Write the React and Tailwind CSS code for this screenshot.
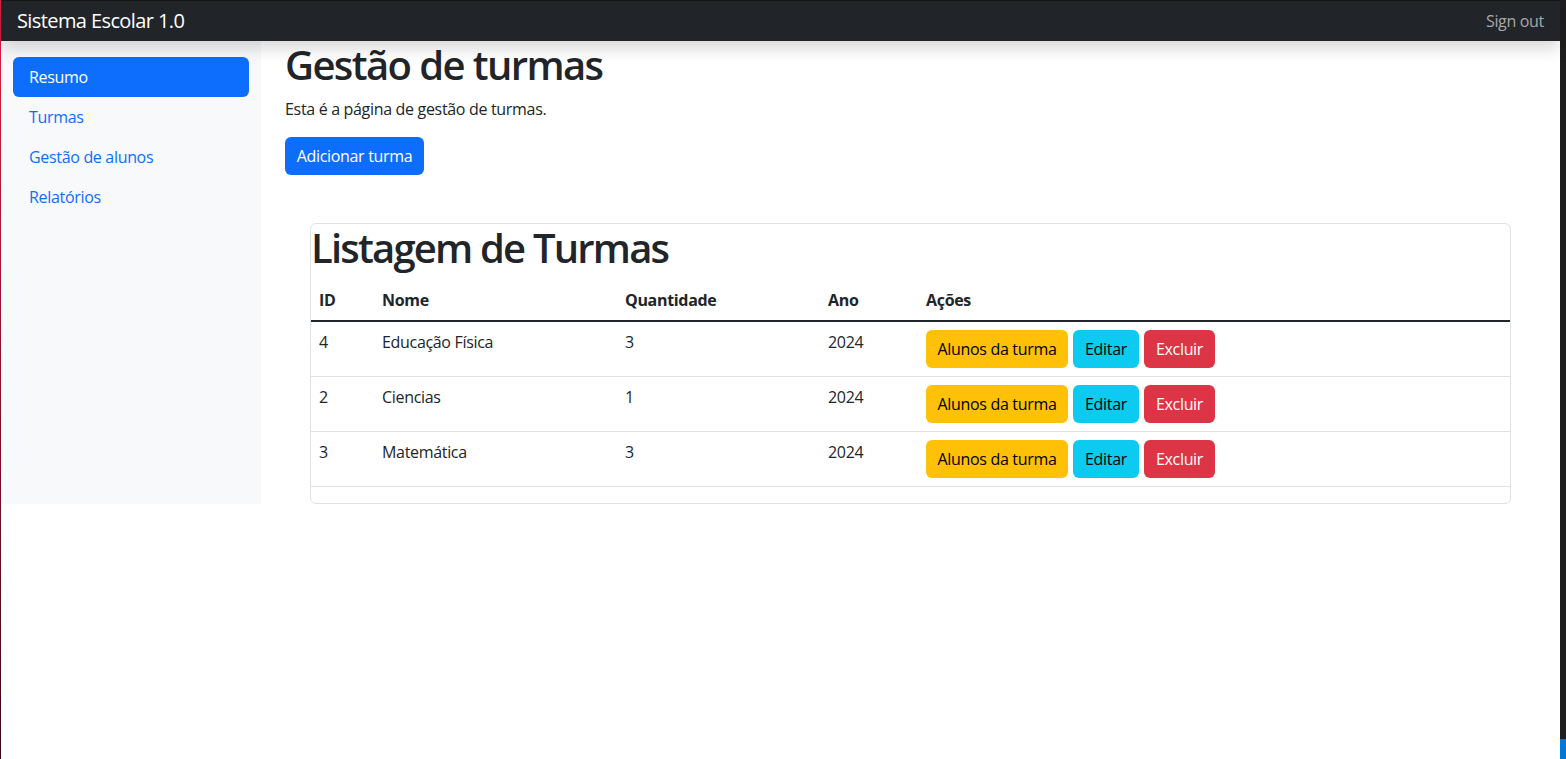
import React from "react";

const turmas = [
  { id: 4, nome: "Educação Física", quantidade: 3, ano: 2024 },
  { id: 2, nome: "Ciencias", quantidade: 1, ano: 2024 },
  { id: 3, nome: "Matemática", quantidade: 3, ano: 2024 },
];

const menu = ["Resumo", "Turmas", "Gestão de alunos", "Relatórios"];

export default function App() {
  return (
    <div className="flex h-[759px] w-full overflow-hidden bg-white font-['Open_Sans',sans-serif] text-base tracking-[-0.02em] text-[#212529]">
      {/* window edge */}
      <div className="w-px shrink-0 bg-linear-to-b from-[#e0213f] to-[#3a0814]" />

      <div className="flex min-w-0 flex-1 flex-col">
        {/* Navbar */}
        <header className="relative z-10 flex h-[41px] shrink-0 items-center justify-between border-t border-[#151515] bg-[#212529] shadow-[0_8px_16px_rgba(0,0,0,0.15)]">
          <span className="pl-4 text-[20px] leading-[30px] tracking-[-0.03em] text-white">Sistema Escolar 1.0</span>
          <a href="#" className="pr-4 text-base text-[#a6a8aa]">
            Sign out
          </a>
        </header>

        <div className="flex items-start">
          <div className="flex self-stretch">
            {/* Sidebar */}
            <nav className="w-[260px] bg-[#f8f9fa] px-3 pt-4">
              <ul className="flex flex-col">
                {menu.map((item, i) => (
                  <li key={item}>
                    <a
                      href="#"
                      className={
                        i === 0
                          ? "block h-10 rounded-md bg-[#0d6efd] px-4 leading-10 text-white"
                          : "block h-10 px-4 leading-10 text-[#0d6efd]"
                      }
                    >
                      {item}
                    </a>
                  </li>
                ))}
              </ul>
            </nav>
          </div>

          {/* Main */}
          <main className="min-w-0 flex-1 px-6">
            <h1 className="mb-2 text-[40px] leading-[48px] font-semibold tracking-[-0.04em]">Gestão de turmas</h1>
            <p className="mb-4 leading-6">Esta é a página de gestão de turmas.</p>
            <button className="h-[38px] w-[139px] rounded-md bg-[#0d6efd] text-white">Adicionar turma</button>

            <div className="mx-[25px] mt-12 rounded-md border border-[#dee2e6]">
              <h1 className="mb-2 text-[40px] leading-[48px] font-semibold tracking-[-0.045em]">Listagem de Turmas</h1>
              <table className="mb-4 w-full table-fixed border-collapse text-left">
                <thead>
                  <tr className="border-b-2 border-[#212529]">
                    <th className="w-[63px] p-2 leading-6 font-bold">ID</th>
                    <th className="w-[243px] p-2 leading-6 font-bold">Nome</th>
                    <th className="w-[203px] p-2 leading-6 font-bold">Quantidade</th>
                    <th className="w-[98px] p-2 leading-6 font-bold">Ano</th>
                    <th className="p-2 leading-6 font-bold">Ações</th>
                  </tr>
                </thead>
                <tbody>
                  {turmas.map((t) => (
                    <tr key={t.id} className="border-b border-[#dee2e6]">
                      <td className="p-2 align-top leading-6">{t.id}</td>
                      <td className="p-2 align-top leading-6">{t.nome}</td>
                      <td className="p-2 align-top leading-6">{t.quantidade}</td>
                      <td className="p-2 align-top leading-6">{t.ano}</td>
                      <td className="p-2 align-top">
                        <div className="flex gap-[5px]">
                          <button className="h-[38px] w-[142px] rounded-md bg-[#ffc107] text-black">Alunos da turma</button>
                          <button className="h-[38px] w-[66px] rounded-md bg-[#0dcaf0] text-black">Editar</button>
                          <button className="h-[38px] w-[71px] rounded-md bg-[#dc3545] text-white">Excluir</button>
                        </div>
                      </td>
                    </tr>
                  ))}
                </tbody>
              </table>
            </div>
          </main>
        </div>
      </div>

      {/* window edge / scrollbar */}
      <div className="flex w-[6px] shrink-0 flex-col bg-[#1e1e1e]">
        <div className="flex-1" />
        <div className="h-5 bg-[#0078d4]" />
      </div>
    </div>
  );
}
